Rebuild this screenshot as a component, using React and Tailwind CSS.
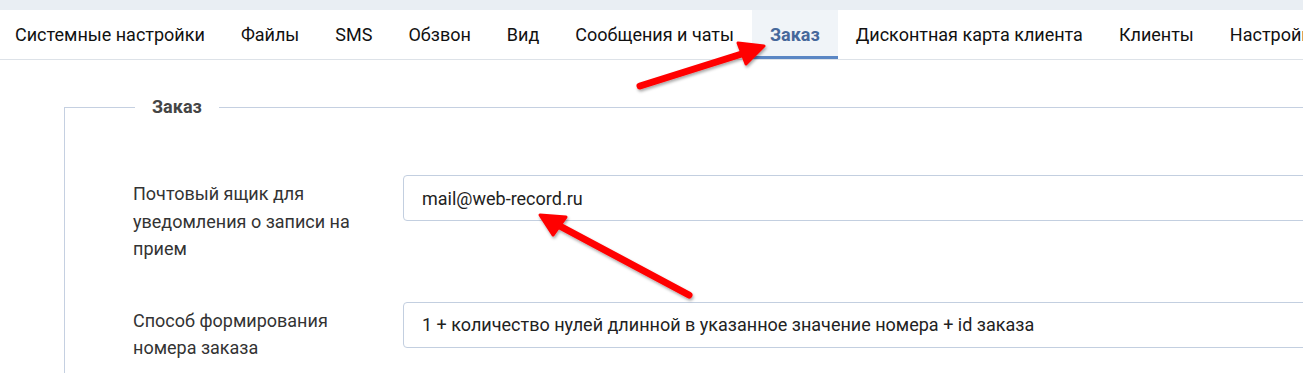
const tabs = [
  "Системные настройки",
  "Файлы",
  "SMS",
  "Обзвон",
  "Вид",
  "Сообщения и чаты",
  "Заказ",
  "Дисконтная карта клиента",
  "Клиенты",
  "Настройки",
];

const Arrows = () => (
  <svg className="absolute inset-0 pointer-events-none" width="1303" height="373">
    <defs>
      <filter id="sh" x="-20%" y="-20%" width="140%" height="140%">
        <feDropShadow dx="1" dy="2" stdDeviation="1.5" floodColor="#000" floodOpacity="0.35" />
      </filter>
    </defs>
    <g filter="url(#sh)" fill="#ff0000" stroke="#ff0000" strokeLinecap="round" strokeLinejoin="round">
      <line x1="640" y1="86" x2="748" y2="52" strokeWidth="7" />
      <polygon points="764,46 738,43 746,64" strokeWidth="3" />
      <line x1="689" y1="295" x2="556" y2="224" strokeWidth="7" />
      <polygon points="540,215 566,217 553,235" strokeWidth="3" />
    </g>
  </svg>
);

const Row = ({ label, value, className }) => (
  <div className={"flex items-start " + className}>
    <div className="w-[270px] shrink-0 pr-[40px] pt-[5px] text-[18px] leading-[27.5px] text-[#333]">
      {label}
    </div>
    <div className="flex h-[46px] flex-1 items-center rounded-[4px] border border-[#c3cfe0] bg-white px-[18px] text-[18px] text-[#222]">
      {value}
    </div>
  </div>
);

export default function App() {
  return (
    <div className="relative h-[373px] w-[1303px] overflow-hidden bg-white font-['Roboto',sans-serif]">
      <div className="h-[10px] bg-[#e9eef3]" />
      <nav className="flex h-[50px] ml-[-3px] border-b border-[#dde2e8] whitespace-nowrap">
        {tabs.map((t) =>
          t === "Заказ" ? (
            <div
              key={t}
              className="flex items-center border-b-[3px] border-[#5a86c4] bg-[#f0f4f8] px-[18px] pt-[3px] text-[18px] font-bold text-[#46689b]"
            >
              {t}
            </div>
          ) : (
            <div key={t} className="flex items-center px-[18px] text-[18px] text-[#111]">
              {t}
            </div>
          )
        )}
      </nav>
      <fieldset className="ml-[64px] mt-[35px] w-[1400px] border border-r-0 border-[#c5d0e1] pl-[68px] pb-[40px]">
        <legend className="ml-[2px] px-[17px] text-[18px] font-bold leading-[24px] text-[#454545]">Заказ</legend>
        <div className="pt-[56px]">
          <Row
            label="Почтовый ящик для уведомления о записи на прием"
            value="mail@web-record.ru"
          />
          <Row
            className="mt-[39px]"
            label="Способ формирования номера заказа"
            value="1 + количество нулей длинной в указанное значение номера + id заказа"
          />
        </div>
      </fieldset>
      <Arrows />
    </div>
  );
}
